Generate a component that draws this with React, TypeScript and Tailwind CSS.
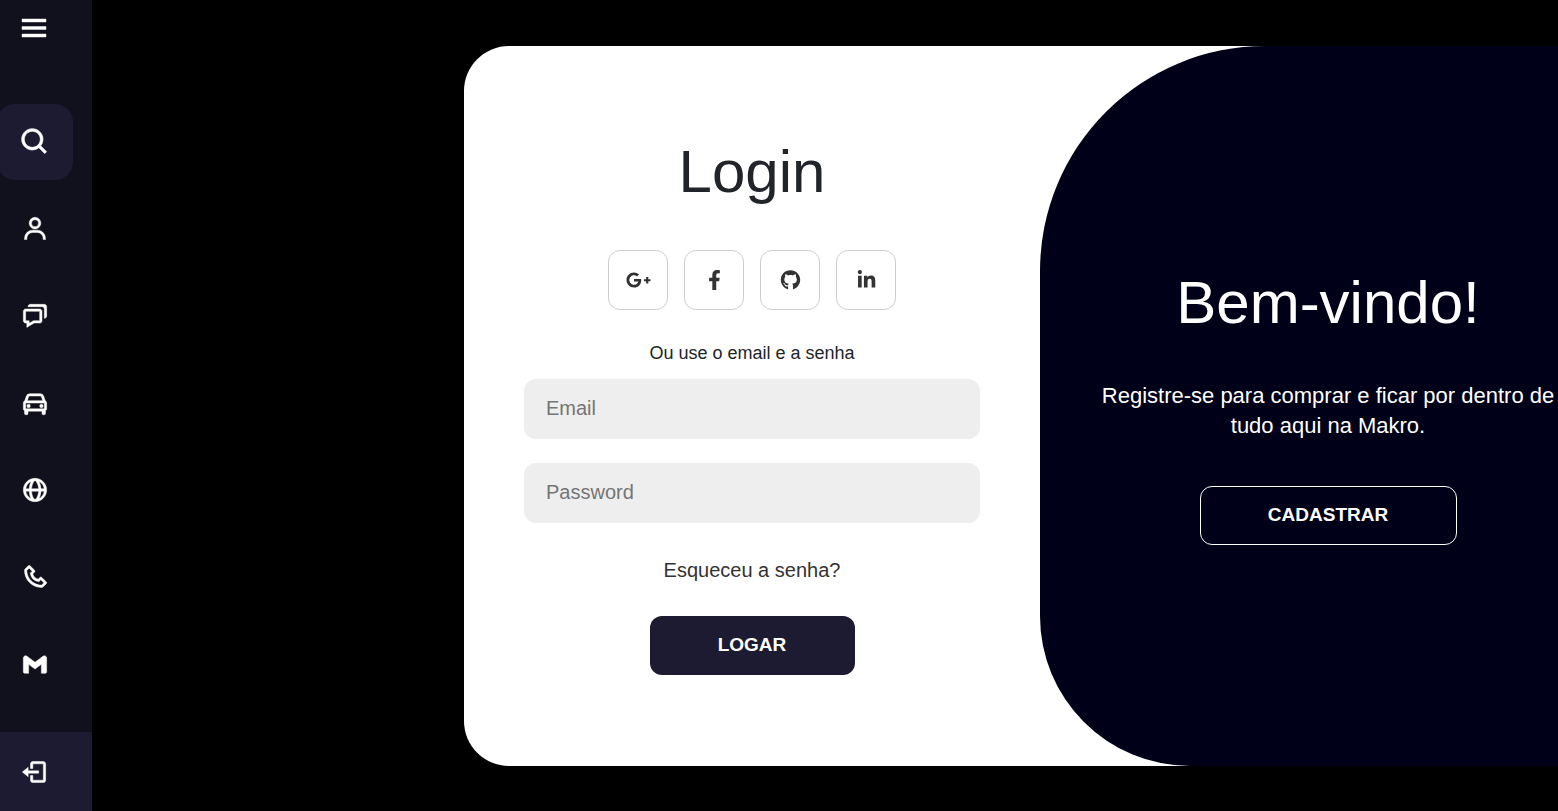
import { BiCar, BiChat, BiGlobe, BiLogOut, BiLogoGmail, BiMenu, BiPhone, BiSearch, BiUser } from 'react-icons/bi';
import { FaFacebookF, FaGithub, FaGooglePlusG, FaLinkedinIn } from 'react-icons/fa';

const links = [
  { label: 'Usuário', Icon: BiUser },
  { label: 'Mensagens', Icon: BiChat },
  { label: 'Carros', Icon: BiCar },
  { label: 'Site', Icon: BiGlobe },
  { label: 'Telefone', Icon: BiPhone },
  { label: 'Gmail', Icon: BiLogoGmail },
];

const socials = [
  { label: 'Google Plus', Icon: FaGooglePlusG },
  { label: 'Facebook', Icon: FaFacebookF },
  { label: 'GitHub', Icon: FaGithub },
  { label: 'LinkedIn', Icon: FaLinkedinIn },
];

const tile = 'flex size-[76px] items-center justify-center rounded-[18px]';
const field =
  'h-[60px] w-full rounded-xl bg-[#eeeeee] px-[22px] pb-0.5 text-[20px] text-[#333333] outline-none placeholder:text-[#757575]';

function Sidebar() {
  return (
    <aside className="flex w-[92px] shrink-0 flex-col overflow-hidden bg-[#11101d] text-white">
      <button type="button" aria-label="Menu" className="ml-4 mt-2.5 size-9">
        <BiMenu className="size-9 stroke-[0.3]" />
      </button>
      <nav className="-ml-[3px] mt-[58px] flex flex-col gap-[11px]">
        <button type="button" aria-label="Buscar" className={`${tile} bg-[#1d1b31]`}>
          <BiSearch className="size-8 stroke-[0.5]" />
        </button>
        {links.map(({ label, Icon }) => (
          <a key={label} href="#" aria-label={label} className={tile}>
            <Icon className="size-7 stroke-[0.4]" />
          </a>
        ))}
      </nav>
      <a href="#" aria-label="Sair" className="mt-auto flex h-[79px] items-center bg-[#1d1b31] pl-5">
        <BiLogOut className="size-7 stroke-[0.4]" />
      </a>
    </aside>
  );
}

function LoginForm() {
  return (
    <form className="flex flex-col items-center justify-center px-[60px]" onSubmit={(e) => e.preventDefault()}>
      <h1 className="text-[60px] leading-[72px] text-[#212529]">Login</h1>
      <div className="mt-[42px] flex gap-4">
        {socials.map(({ label, Icon }) => (
          <a
            key={label}
            href="#"
            aria-label={label}
            className="flex size-[60px] items-center justify-center rounded-xl border border-[#cccccc] text-[#333333]"
          >
            <Icon className="h-5 w-[25px]" />
          </a>
        ))}
      </div>
      <span className="mt-[30px] text-[18px] leading-[27px] text-[#212529]">Ou use o email e a senha</span>
      <input type="email" aria-label="Email" placeholder="Email" className={`${field} mt-3`} />
      <input type="password" aria-label="Password" placeholder="Password" className={`${field} mt-6`} />
      <a href="#" className="mt-8 text-[20px] leading-[30px] text-[#333333]">Esqueceu a senha?</a>
      <button type="submit" className="mt-[31px] h-[59px] w-[205px] rounded-xl bg-[#1d1b31] text-[19px] font-bold text-white">
        LOGAR
      </button>
    </form>
  );
}

function Welcome() {
  return (
    <section className="flex flex-col items-center justify-center rounded-bl-[150px] rounded-tl-[225px] bg-[#000018] px-14 text-center text-white">
      <h2 className="text-[60px] leading-[72px]">Bem-vindo!</h2>
      <p className="mt-[42px] text-[22px] leading-[30px]">
        Registre-se para comprar e ficar por dentro de tudo aqui na Makro.
      </p>
      <button type="button" className="mt-[45px] h-[59px] w-[257px] rounded-xl border border-white text-[19px] font-bold">
        CADASTRAR
      </button>
    </section>
  );
}

export default function App() {
  return (
    <div className="flex min-h-screen overflow-hidden bg-black font-['Liberation_Sans',Arial,sans-serif]">
      <Sidebar />
      <main className="flex min-w-0 flex-1 items-center overflow-hidden pl-[372px]">
        <div className="grid min-h-[720px] min-w-[1152px] flex-1 grid-cols-2 overflow-hidden rounded-[45px] bg-white">
          <LoginForm />
          <Welcome />
        </div>
      </main>
    </div>
  );
}
